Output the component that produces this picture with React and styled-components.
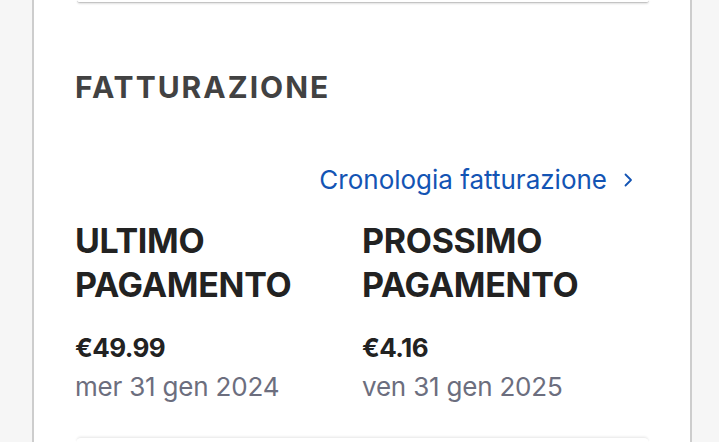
import React from "react";
import styled, { createGlobalStyle } from "styled-components";

const GlobalStyle = createGlobalStyle`
  html, body {
    margin: 0;
    padding: 0;
    background: #f6f6f6;
    font-family: Inter, "Liberation Sans", sans-serif;
    overflow: hidden;
  }
`;

const Page = styled.div`
  width: 719px;
  height: 442px;
  overflow: hidden;
  display: flex;
  justify-content: flex-start;
`;

const Card = styled.section`
  margin-left: 32px;
  width: 660px;
  height: 442px;
  box-sizing: border-box;
  background: #ffffff;
  border-left: 2px solid #cdcdcd;
  border-right: 2px solid #cdcdcd;
  padding: 0 41px 0 41px;
  display: flex;
  flex-direction: column;
`;

const PrevPanel = styled.div`
  height: 2px;
  margin: 0 0 0 2px;
  border-bottom: 1px solid #c4c4c4;
  border-radius: 0 0 8px 8px;
  box-shadow: 0 1px 2px rgba(0, 0, 0, 0.12);
`;

const Title = styled.h2`
  margin: 62px 0 0;
  font-size: 30px;
  font-weight: 700;
  letter-spacing: 2px;
  color: #424242;
  line-height: 44px;
`;

const LinkRow = styled.div`
  display: flex;
  justify-content: flex-end;
  margin-top: 53px;
  padding-right: 14px;
`;

const HistoryLink = styled.a`
  display: flex;
  align-items: center;
  gap: 14px;
  color: #1354b4;
  font-size: 26px;
  line-height: 36px;
  text-decoration: none;

  svg {
    width: 14px;
    height: 14px;
  }
`;

const Columns = styled.div`
  display: grid;
  grid-template-columns: 1fr 1fr;
  margin-top: 21px;
`;

const Col = styled.div`
  display: flex;
  flex-direction: column;
`;

const PayLabel = styled.h3`
  margin: 0;
  font-size: 34px;
  font-weight: 700;
  line-height: 44px;
  color: #222222;
  letter-spacing: -0.3px;
`;

const Amount = styled.div`
  margin-top: 22px;
  font-size: 26px;
  font-weight: 700;
  line-height: 38px;
  color: #222222;
  letter-spacing: -0.6px;
`;

const DateText = styled.div`
  font-size: 26px;
  line-height: 40px;
  color: #6c6e7e;
  letter-spacing: -0.2px;
`;

const NextPanel = styled.div`
  margin: 30px 0 0 1px;
  flex: 1;
  border-top: 1px solid #eeeeee;
  border-radius: 10px 10px 0 0;
  box-shadow: 0 -1px 2px rgba(0, 0, 0, 0.05);
`;

const Chevron = () => (
  <svg viewBox="0 0 14 14" fill="none" stroke="currentColor" strokeWidth="1.8" strokeLinecap="round" strokeLinejoin="round">
    <path d="M4.5 1.5 L10 7 L4.5 12.5" />
  </svg>
);

const payments = [
  { label: ["ULTIMO", "PAGAMENTO"], amount: "€49.99", date: "mer 31 gen 2024" },
  { label: ["PROSSIMO", "PAGAMENTO"], amount: "€4.16", date: "ven 31 gen 2025" },
];

export default function App() {
  return (
    <Page>
      <GlobalStyle />
      <Card>
        <PrevPanel />
        <Title>FATTURAZIONE</Title>
        <LinkRow>
          <HistoryLink href="#">
            Cronologia fatturazione
            <Chevron />
          </HistoryLink>
        </LinkRow>
        <Columns>
          {payments.map((p) => (
            <Col key={p.amount}>
              <PayLabel>
                {p.label[0]}
                <br />
                {p.label[1]}
              </PayLabel>
              <Amount>{p.amount}</Amount>
              <DateText>{p.date}</DateText>
            </Col>
          ))}
        </Columns>
        <NextPanel />
      </Card>
    </Page>
  );
}
